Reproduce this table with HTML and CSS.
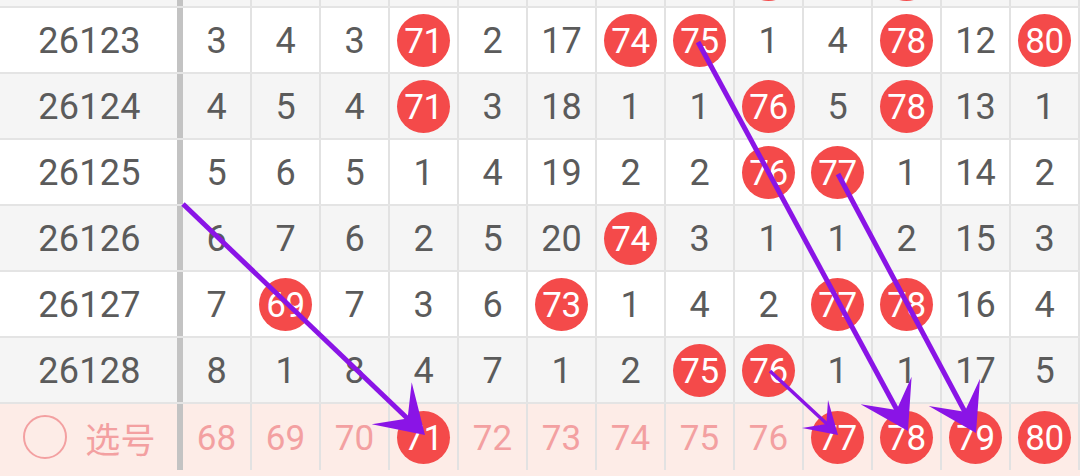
FILE: index.html
```html
<!DOCTYPE html>
<html lang="zh">
<head>
<meta charset="utf-8">
<title>走势图</title>
<link rel="stylesheet" href="styles.css">
</head>
<body>
<div class="chart">
  <div class="table">
    <div class="row alt first">
      <div class="issue"></div>
      <div class="c"></div><div class="c"></div><div class="c"></div><div class="c"></div><div class="c"></div><div class="c"></div><div class="c"></div><div class="c"></div><div class="c"><span class="ball"></span></div><div class="c"></div><div class="c"><span class="ball"></span></div><div class="c"></div><div class="c"></div>
    </div>
    <div class="row">
      <div class="issue">26123</div>
      <div class="c">3</div><div class="c">4</div><div class="c">3</div><div class="c"><span class="ball">71</span></div><div class="c">2</div><div class="c">17</div><div class="c"><span class="ball">74</span></div><div class="c"><span class="ball">75</span></div><div class="c">1</div><div class="c">4</div><div class="c"><span class="ball">78</span></div><div class="c">12</div><div class="c"><span class="ball">80</span></div>
    </div>
    <div class="row alt">
      <div class="issue">26124</div>
      <div class="c">4</div><div class="c">5</div><div class="c">4</div><div class="c"><span class="ball">71</span></div><div class="c">3</div><div class="c">18</div><div class="c">1</div><div class="c">1</div><div class="c"><span class="ball">76</span></div><div class="c">5</div><div class="c"><span class="ball">78</span></div><div class="c">13</div><div class="c">1</div>
    </div>
    <div class="row">
      <div class="issue">26125</div>
      <div class="c">5</div><div class="c">6</div><div class="c">5</div><div class="c">1</div><div class="c">4</div><div class="c">19</div><div class="c">2</div><div class="c">2</div><div class="c"><span class="ball">76</span></div><div class="c"><span class="ball">77</span></div><div class="c">1</div><div class="c">14</div><div class="c">2</div>
    </div>
    <div class="row alt">
      <div class="issue">26126</div>
      <div class="c">6</div><div class="c">7</div><div class="c">6</div><div class="c">2</div><div class="c">5</div><div class="c">20</div><div class="c"><span class="ball">74</span></div><div class="c">3</div><div class="c">1</div><div class="c">1</div><div class="c">2</div><div class="c">15</div><div class="c">3</div>
    </div>
    <div class="row">
      <div class="issue">26127</div>
      <div class="c">7</div><div class="c"><span class="ball">69</span></div><div class="c">7</div><div class="c">3</div><div class="c">6</div><div class="c"><span class="ball">73</span></div><div class="c">1</div><div class="c">4</div><div class="c">2</div><div class="c"><span class="ball">77</span></div><div class="c"><span class="ball">78</span></div><div class="c">16</div><div class="c">4</div>
    </div>
    <div class="row alt">
      <div class="issue">26128</div>
      <div class="c">8</div><div class="c">1</div><div class="c">8</div><div class="c">4</div><div class="c">7</div><div class="c">1</div><div class="c">2</div><div class="c"><span class="ball">75</span></div><div class="c"><span class="ball">76</span></div><div class="c">1</div><div class="c">1</div><div class="c">17</div><div class="c">5</div>
    </div>
    <div class="row pick">
      <div class="issue"><span class="ring"></span><span class="label">选号</span></div>
      <div class="c">68</div><div class="c">69</div><div class="c">70</div><div class="c"><span class="ball">71</span></div><div class="c">72</div><div class="c">73</div><div class="c">74</div><div class="c">75</div><div class="c">76</div><div class="c"><span class="ball">77</span></div><div class="c"><span class="ball">78</span></div><div class="c"><span class="ball">79</span></div><div class="c"><span class="ball">80</span></div>
    </div>
  </div>
  <svg class="arrows" viewBox="0 0 1080 476" width="1080" height="476" xmlns="http://www.w3.org/2000/svg">
    <g class="arrow">
      <line x1="183" y1="204" x2="408" y2="419" stroke-width="5"/>
      <polygon points="425,435 411.7,382.2 407.6,418.4 371.7,424.2"/>
    </g>
    <g class="arrow">
      <line x1="698" y1="42" x2="897" y2="410" stroke-width="5"/>
      <polygon points="908,431 911.6,376.7 896.6,409.9 860.6,404.3"/>
    </g>
    <g class="arrow">
      <line x1="838" y1="174" x2="965" y2="412" stroke-width="5"/>
      <polygon points="976,433 980,378.8 964.7,411.8 928.8,406"/>
    </g>
    <g class="arrow">
      <line x1="770" y1="371" x2="827" y2="424" stroke-width="3.5"/>
      <polygon points="838,435 828,400 826.4,424 802,428"/>
    </g>
  </svg>
</div>
</body>
</html>
```

FILE: styles.css
```css
* {
  box-sizing: border-box;
}

html, body {
  margin: 0;
  padding: 0;
  background: #ffffff;
}

.chart {
  position: relative;
  width: 1080px;
  height: 476px;
  overflow: hidden;
  font-family: "Roboto", "Noto Sans CJK SC", sans-serif;
}

.table {
  display: flex;
  flex-direction: column;
}

.row {
  display: flex;
  height: 66px;
  border-bottom: 2px solid #e4e4e4;
  background: #ffffff;
}

.row.first {
  margin-top: -58px;
}

.row.alt {
  background: #f5f5f5;
}

.issue {
  width: 183px;
  flex: none;
  border-right: 6px solid #c3c3c3;
  display: flex;
  align-items: center;
  justify-content: center;
  gap: 18px;
  font-size: 36px;
  color: #5b5b5b;
  padding-left: 2px;
  padding-top: 2px;
  letter-spacing: 0.3px;
}

.c {
  width: 69px;
  flex: none;
  border-right: 2px solid #e2e2e2;
  display: flex;
  align-items: center;
  justify-content: center;
  font-size: 36px;
  color: #5b5b5b;
  line-height: 1;
  padding-top: 2px;
}

.ball {
  width: 53px;
  height: 53px;
  margin-top: -2px;
  border-radius: 50%;
  background: #f44a4a;
  color: #ffffff;
  display: flex;
  align-items: center;
  justify-content: center;
  font-size: 35px;
  letter-spacing: -0.5px;
  padding-top: 2px;
}

.row.pick {
  height: 72px;
  border-bottom: none;
  padding-bottom: 6px;
  background: #fdece7;
}

.row.pick .c,
.row.pick .issue {
  color: #f3a0a1;
  font-size: 35px;
}

.row.pick .ball {
  color: #ffffff;
}

.ring {
  width: 44px;
  height: 44px;
  margin-top: -2px;
  border-radius: 50%;
  border: 2.5px solid #f3a0a1;
  flex: none;
}

.label {
  font-family: "Noto Sans CJK SC", sans-serif;
  font-size: 35px;
  line-height: 1;
  margin-top: -2px;
}

.arrows {
  position: absolute;
  left: 0;
  top: 0;
  pointer-events: none;
}

.arrow line {
  stroke: #8a14e6;
  stroke-linecap: butt;
}

.arrow polygon {
  fill: #8a14e6;
}
```
